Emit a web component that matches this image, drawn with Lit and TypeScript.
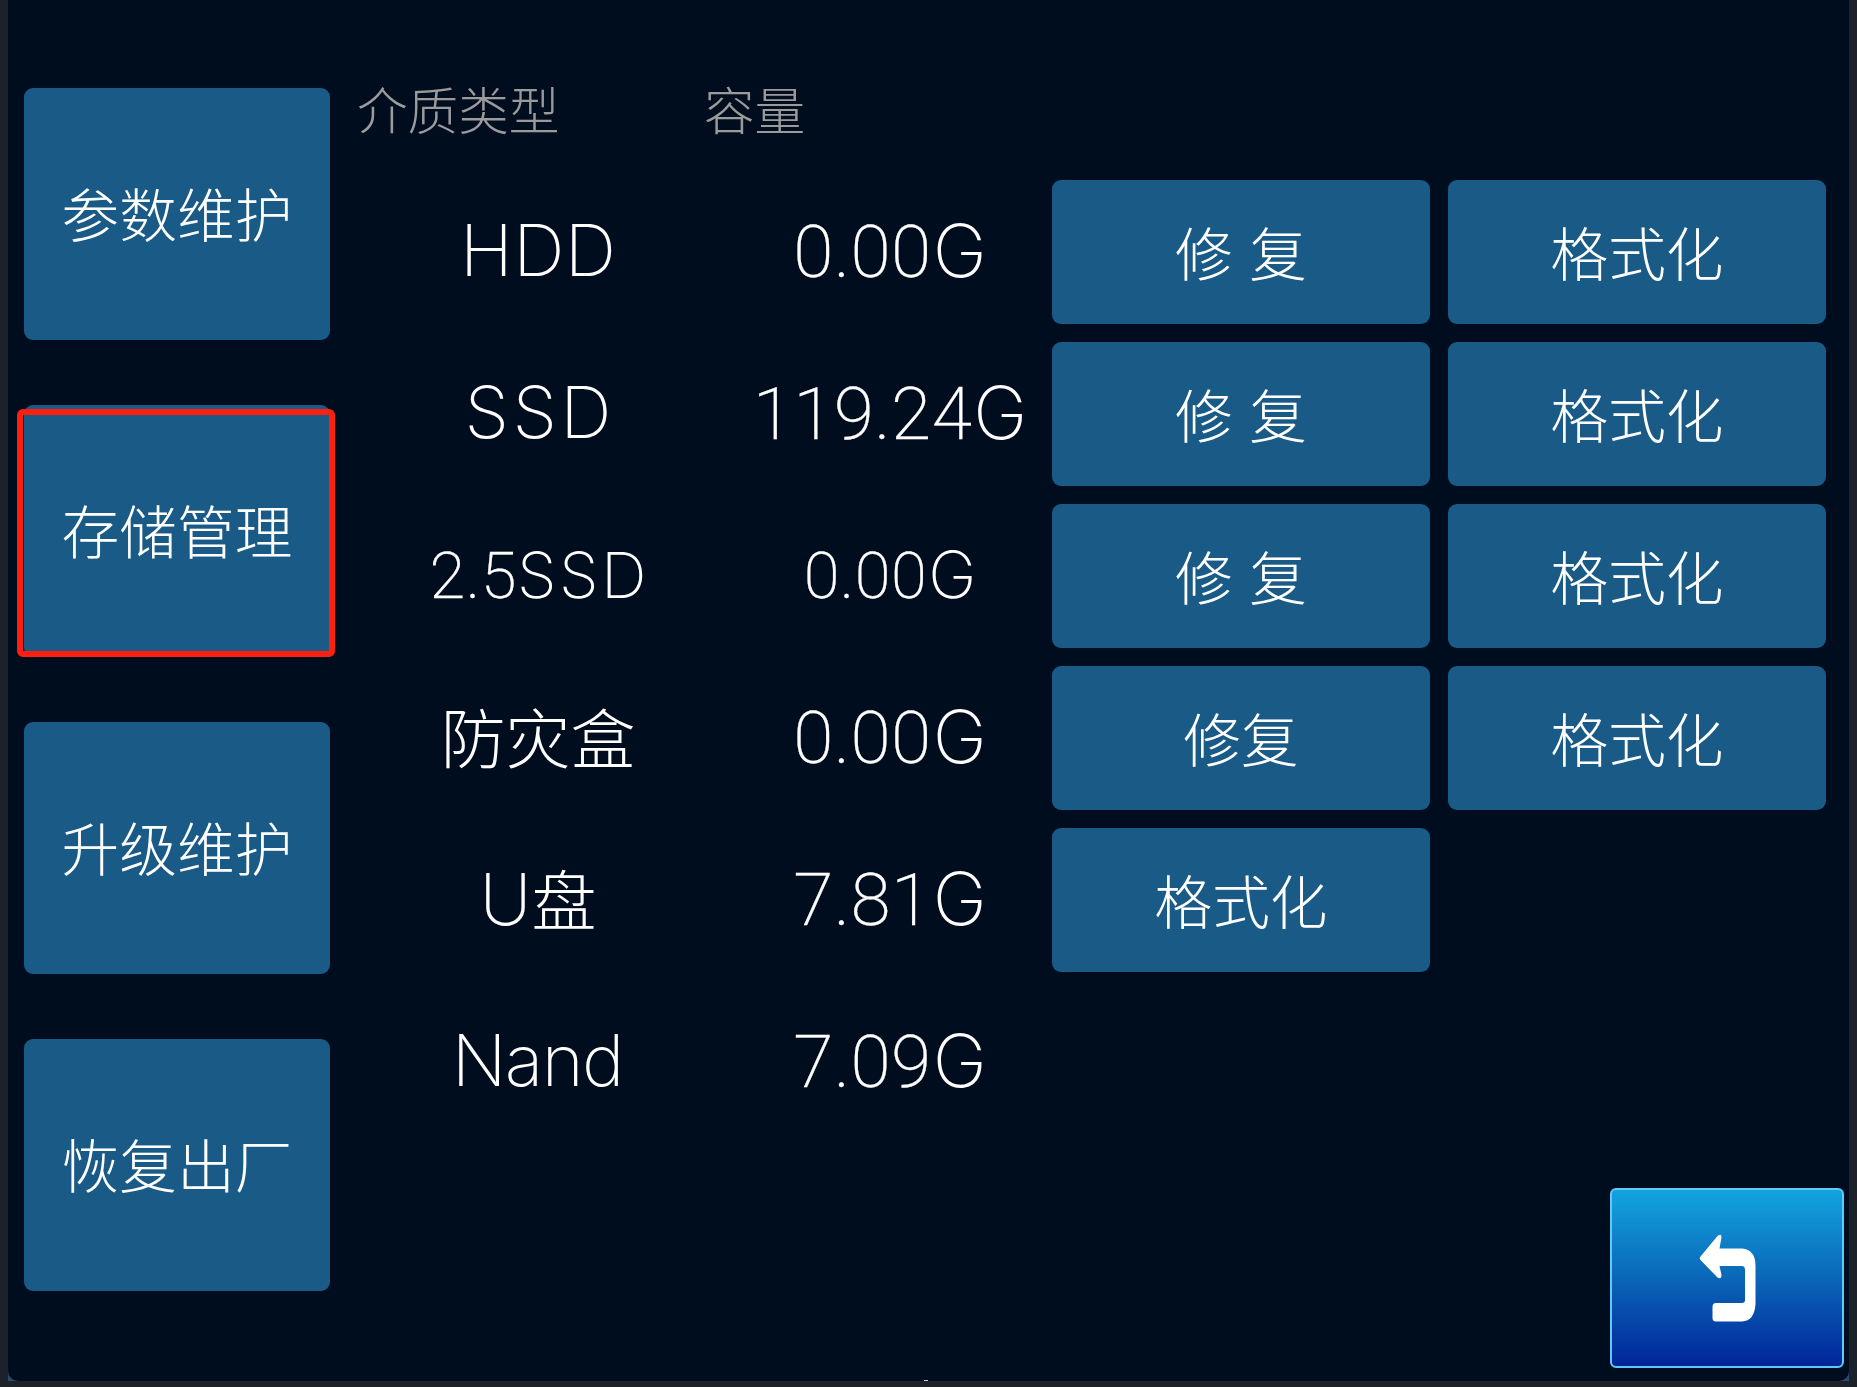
import { LitElement, html, css, nothing } from "lit";

interface Medium {
  name: string;
  capacity: string;
  actions: string[];
  small?: boolean;
  /** Extra letter spacing of the Latin part of the name, in px. */
  tracking?: number;
}

const NAV = ["参数维护", "存储管理", "升级维护", "恢复出厂"];
const ACTIVE = 1;

const MEDIA: Medium[] = [
  { name: "HDD", capacity: "0.00G", actions: ["修 复", "格式化"], tracking: 0.3 },
  { name: "SSD", capacity: "119.24G", actions: ["修 复", "格式化"], tracking: 3.5 },
  { name: "2.5SSD", capacity: "0.00G", actions: ["修 复", "格式化"], small: true, tracking: 2.5 },
  { name: "防灾盒", capacity: "0.00G", actions: ["修复", "格式化"] },
  { name: "U盘", capacity: "7.81G", actions: ["格式化"] },
  { name: "Nand", capacity: "7.09G", actions: [], tracking: -1.6 },
];

/** Splits a label into digit, Latin and Chinese runs, each with its own face. */
const runs = (text: string, tracking = 0) =>
  (text.match(/[\d.]+|[A-Za-z]+|[^\dA-Za-z.]+/g) ?? []).map((part) => {
    if (/^[\d.]/.test(part)) return html`<span class="num">${part}</span>`;
    if (/^[A-Za-z]/.test(part))
      return html`<span class="lat" style="letter-spacing:${tracking}px;margin-right:${-tracking}px">${part}</span>`;
    return html`<span class="han">${part}</span>`;
  });

class AppRoot extends LitElement {
  static styles = css`
    :host {
      display: block;
      box-sizing: border-box;
      width: 1857px;
      height: 1387px;
      padding: 0 8px 6px;
      overflow: hidden;
      background: #1c222a;
      color: #fff;
      font-family: "Noto Sans CJK SC", sans-serif;
      font-weight: 300;
    }
    .corners {
      height: 1381px;
      background: #2c4a6e;
    }
    .screen {
      position: relative;
      box-sizing: border-box;
      height: 1381px;
      padding: 88px 23px 0 16px;
      display: flex;
      background: #000d1e;
      border-radius: 0 0 10px 10px;
    }
    .nav {
      flex: none;
      width: 306px;
      display: flex;
      flex-direction: column;
      gap: 65px;
    }
    .btn {
      display: flex;
      align-items: center;
      justify-content: center;
      box-sizing: border-box;
      margin: 0;
      padding: 0;
      border: 0;
      background: #1a5a86;
      color: #fff;
      font: inherit;
      font-size: 57.7px;
      line-height: 60px;
      border-radius: 9px;
      white-space: pre;
    }
    .nav .btn {
      position: relative;
      height: 252px;
      padding-bottom: 5px;
    }
    .mark {
      position: absolute;
      left: -7px;
      top: 4px;
      width: 318px;
      height: 248px;
      box-sizing: border-box;
      border: 6px solid #ff1f10;
      border-radius: 6px;
    }
    .main {
      flex: 1;
      margin-left: 27px;
    }
    .head {
      display: grid;
      grid-template-columns: 347px 1fr;
      height: 92px;
      color: #9b9b9b;
      font-size: 50.6px;
      line-height: 40px;
    }
    .row {
      display: grid;
      grid-template-columns: 362px 333px 378px 378px;
      height: 144px;
      margin-bottom: 18px;
      align-items: stretch;
    }
    .cell {
      display: flex;
      align-items: baseline;
      justify-content: center;
      line-height: 141px;
      white-space: nowrap;
    }
    .cell + .cell { margin-right: -9px; }
    .num {
      font-family: Roboto, sans-serif;
      font-size: 73px;
      font-weight: 200;
      letter-spacing: 0.4px;
      -webkit-text-stroke: 0.3px #fff;
    }
    .lat { font-family: Inter, sans-serif; font-size: 71.5px; font-weight: 230; }
    .cell + .cell .lat { font-size: 73px; padding-left: 1px; }
    .han { font-size: 64.9px; line-height: 138px; }
    .small .num { font-size: 65px; }
    .small .lat { font-size: 63.5px; }
    .small .cell + .cell .lat { font-size: 65px; }
    .small .cell { line-height: 142px; }
    .row .btn { padding-bottom: 3px; width: 378px; word-spacing: 4px; }
    .row .btn + .btn { margin-left: 18px; }
    .back {
      position: absolute;
      right: 5px;
      bottom: 13px;
      width: 234px;
      height: 180px;
      box-sizing: border-box;
      padding: 0;
      border: 2px solid #5fcaf7;
      border-radius: 6px;
      background: linear-gradient(#12a4df, #0a66b8 50%, #02259a);
    }
    .back svg { display: block; width: 230px; height: 176px; }
    .tick {
      position: absolute;
      left: 916px;
      bottom: 0;
      width: 4px;
      height: 1px;
      background: #d0d0d0;
    }
  `;

  render() {
    return html`
      <div class="corners">
        <div class="screen">
          <nav class="nav">
            ${NAV.map(
              (t, i) => html`<button class="btn">${t}${i === ACTIVE ? html`<span class="mark"></span>` : nothing}</button>`
            )}
          </nav>
          <main class="main">
            <div class="head"><span>介质类型</span><span>容量</span></div>
            ${MEDIA.map(
              (m) => html`<div class="row ${m.small ? "small" : ""}">
                <div class="cell">${runs(m.name, m.tracking)}</div>
                <div class="cell">${runs(m.capacity)}</div>
                ${m.actions.map((a) => html`<button class="btn">${a}</button>`)}
              </div>`
            )}
          </main>
          <button class="back" aria-label="返回">
            <svg viewBox="1612 1190 230 176">
              <path
                fill="#fff"
                d="M1700.5 1256.5 L1717.5 1236 Q1721.5 1233 1721.5 1237 L1719.5 1248.5 H1742 Q1755.5 1249.5 1755.5 1266 V1304 Q1754.5 1321 1742 1321.5 H1716 Q1712.5 1321.5 1712.5 1318 V1307 Q1712.5 1303 1716 1303 H1742 Q1745 1303 1745 1300 V1270 Q1745 1266 1742 1266 H1719.5 L1721.5 1275 Q1721.5 1280 1717.5 1277.5 L1700.5 1260 Q1699 1258 1700.5 1256.5 Z"
              />
            </svg>
          </button>
          <span class="tick"></span>
        </div>
      </div>
    `;
  }
}
customElements.define("app-root", AppRoot);
